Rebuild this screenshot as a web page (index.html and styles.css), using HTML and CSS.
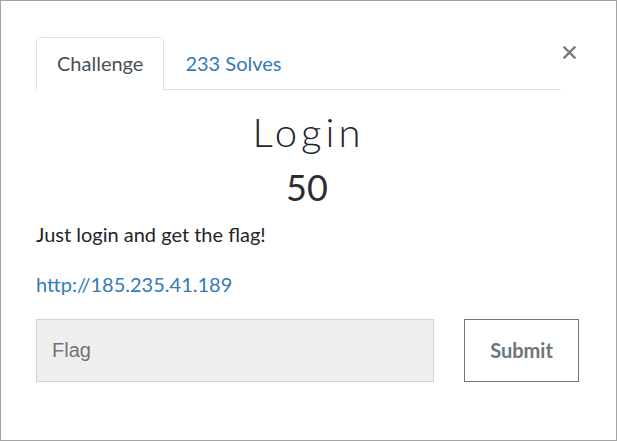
FILE: index.html
```html
<!DOCTYPE html>
<html>
<head>
<meta charset="utf-8">
<link rel="stylesheet" href="styles.css">
</head>
<body>
<div class="frame">
  <div class="header">
    <ul class="tabs">
      <li class="tab active">Challenge</li>
      <li class="tab"><a href="#">233 Solves</a></li>
    </ul>
    <button class="close" aria-label="Close">
      <svg width="13" height="13" viewBox="0 0 13 13"><path d="M1.5 1.5 L11.5 11.5 M11.5 1.5 L1.5 11.5" stroke="#7a7a7a" stroke-width="2.4" stroke-linecap="square" fill="none"/></svg>
    </button>
  </div>
  <h2 class="title">Login</h2>
  <h3 class="value">50</h3>
  <p class="desc">Just login and get the flag!</p>
  <p class="desc"><a href="#">http://185.235.41.189</a></p>
  <form class="submit-row">
    <input class="flag" type="text" placeholder="Flag">
    <button class="submit" type="button">Submit</button>
  </form>
</div>
</body>
</html>
```
FILE: styles.css
```css
* { box-sizing: border-box; }
html, body { margin: 0; padding: 0; background: #fff; }
body { font-family: Lato, "Open Sans", sans-serif; color: #212529; }
.frame {
  width: 617px;
  height: 441px;
  border: 1px solid #a3a3a3;
  padding: 36px 38px 0 35px;
}
.header { display: flex; align-items: flex-start; }
.tabs {
  list-style: none;
  margin: 0;
  padding: 0;
  width: 525px;
  display: flex;
  border-bottom: 1px solid #dee2e6;
}
.tab {
  font-size: 20px;
  line-height: 30px;
  padding: 10px 20px 11px;
  border: 1px solid transparent;
  margin-bottom: -1px;
  border-top-left-radius: 5px;
  border-top-right-radius: 5px;
  color: #495057;
}
.tab.active {
  border-color: #dee2e6 #dee2e6 #fff;
  background: #fff;
}
.tab a { color: #337ab7; text-decoration: none; }
.close {
  flex: 1;
  background: none;
  border: 0;
  padding: 0;
  margin-top: 9px;
  display: flex;
  justify-content: center;
  height: 13px;
}
.close svg { display: block; }
.title {
  margin: 18px 0 10px;
  padding-left: 3px;
  text-align: center;
  font-weight: 300;
  font-size: 40px;
  line-height: 48px;
  letter-spacing: 4px;
  color: #212529;
}
.value {
  margin: 0 0 10px;
  text-align: center;
  font-weight: 400;
  font-size: 36px;
  line-height: 43px;
  color: #2a2e33;
}
.desc {
  margin: 0 0 20px;
  font-size: 20px;
  line-height: 30px;
}
.desc a { color: #337ab7; text-decoration: none; }
.submit-row {
  display: grid;
  grid-template-columns: 398px 115px;
  column-gap: 30px;
  margin: 0;
}
.flag {
  height: 63px;
  border: 1px solid #ced4da;
  background: #efefef;
  padding: 0 15px;
  font-family: "Liberation Sans", Arial, sans-serif;
  font-size: 20px;
  color: #495057;
  outline: none;
  border-radius: 0;
}
.flag::placeholder { color: #6c757d; opacity: 1; }
.submit {
  height: 63px;
  border: 1px solid #6c757d;
  background: #fff;
  color: #6c757d;
  font-family: Lato, sans-serif;
  font-weight: 700;
  font-size: 20px;
  border-radius: 0;
  padding: 0 0 2px;
}
```
